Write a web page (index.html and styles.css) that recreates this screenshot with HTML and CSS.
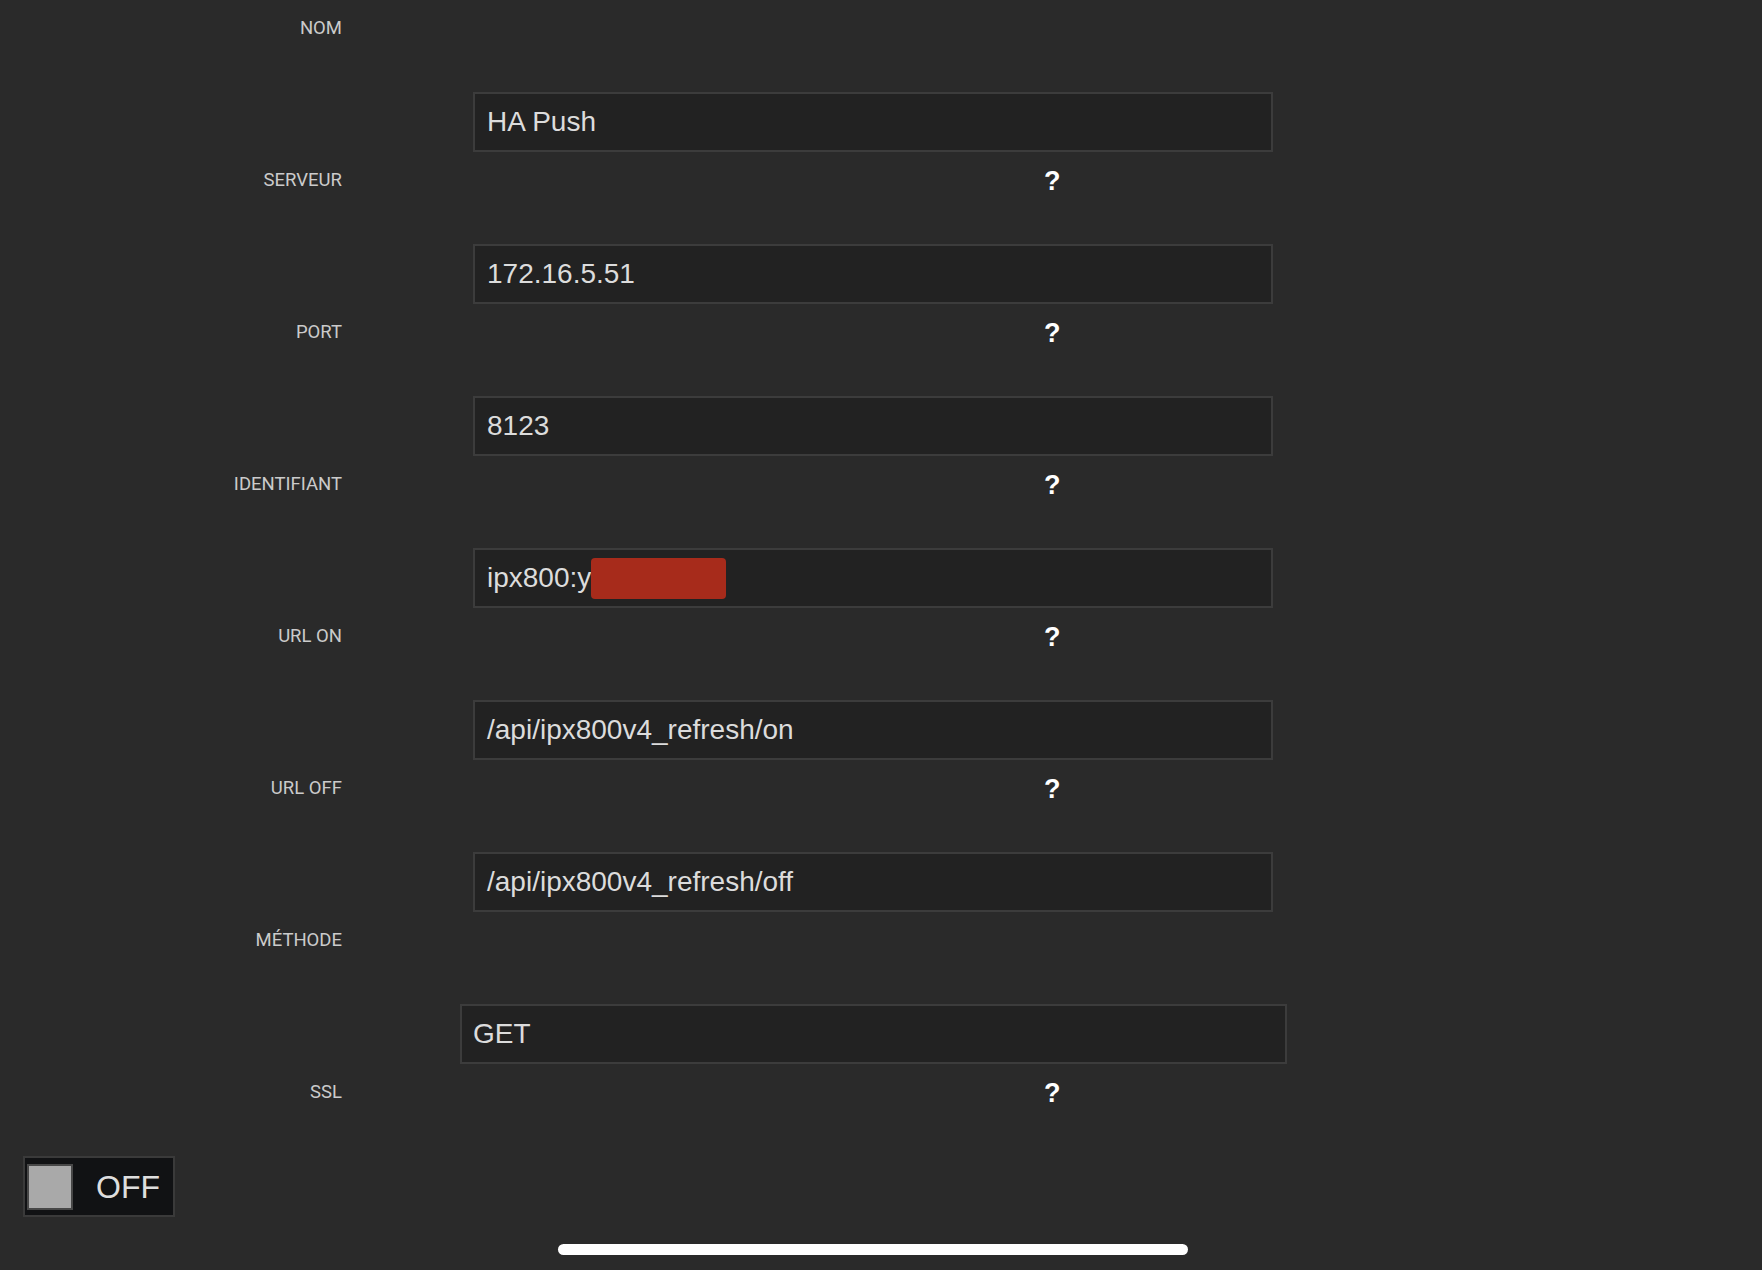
FILE: index.html
```html
<!DOCTYPE html>
<html lang="fr">
<head>
<meta charset="utf-8">
<title>HA Push</title>
<link rel="stylesheet" href="styles.css">
</head>
<body>
<main class="form">
  <section class="field">
    <div class="label-row"><span class="label">NOM</span></div>
    <div class="input">HA Push</div>
  </section>
  <section class="field">
    <div class="label-row"><span class="label">SERVEUR</span><span class="help">?</span></div>
    <div class="input">172.16.5.51</div>
  </section>
  <section class="field">
    <div class="label-row"><span class="label">PORT</span><span class="help">?</span></div>
    <div class="input">8123</div>
  </section>
  <section class="field">
    <div class="label-row"><span class="label">IDENTIFIANT</span><span class="help">?</span></div>
    <div class="input">ipx800:y<span class="redact"></span></div>
  </section>
  <section class="field">
    <div class="label-row"><span class="label">URL ON</span><span class="help">?</span></div>
    <div class="input">/api/ipx800v4_refresh/on</div>
  </section>
  <section class="field">
    <div class="label-row"><span class="label">URL OFF</span><span class="help">?</span></div>
    <div class="input">/api/ipx800v4_refresh/off</div>
  </section>
  <section class="field">
    <div class="label-row"><span class="label">MÉTHODE</span></div>
    <div class="select">GET</div>
  </section>
  <section class="field last">
    <div class="label-row"><span class="label">SSL</span><span class="help">?</span></div>
    <div class="toggle"><span class="knob"></span><span class="toggle-text">OFF</span></div>
  </section>
  <div class="home-bar"></div>
</main>
</body>
</html>
```
FILE: styles.css
```css
html, body {
  margin: 0;
  padding: 0;
  background: #2a2a2a;
}

body {
  width: 1762px;
  height: 1270px;
  overflow: hidden;
  font-family: "Liberation Sans", Arial, sans-serif;
}

.form {
  display: flex;
  flex-direction: column;
}

.field {
  height: 152px;
  display: flex;
  flex-direction: column;
}

.label-row {
  height: 55px;
  display: flex;
  align-items: center;
}

.label {
  width: 342px;
  text-align: right;
  font-family: Roboto, "Liberation Sans", sans-serif;
  font-size: 18.5px;
  color: #cbcbcb;
}

.help {
  margin-left: 702px;
  margin-top: 4px;
  font-family: "Liberation Sans", Arial, sans-serif;
  font-weight: bold;
  font-size: 27px;
  color: #ffffff;
  line-height: 1;
}

.input {
  margin-top: 37px;
  margin-left: 473px;
  width: 800px;
  height: 60px;
  box-sizing: border-box;
  border: 2px solid #3c3c3c;
  background: #222222;
  display: flex;
  align-items: center;
  padding-left: 12px;
  font-size: 28px;
  color: #dcdcdc;
}

.redact {
  display: inline-block;
  width: 135px;
  height: 41px;
  background: #a72b1b;
  border-radius: 4px;
}

.select {
  margin-top: 37px;
  margin-left: 460px;
  width: 827px;
  height: 60px;
  box-sizing: border-box;
  border: 2px solid #3c3c3c;
  background: #222222;
  display: flex;
  align-items: center;
  padding-left: 11px;
  font-size: 28px;
  color: #dcdcdc;
}

.field.last {
  height: 153px;
}

.toggle {
  margin-top: 37px;
  margin-left: 23px;
  width: 152px;
  height: 61px;
  box-sizing: border-box;
  border: 2px solid #3a3a3a;
  background: #111214;
  display: flex;
  align-items: center;
  padding-left: 2px;
}

.knob {
  width: 46px;
  height: 46px;
  box-sizing: border-box;
  border: 2px solid #474747;
  background: #a9a9a9;
}

.toggle-text {
  margin-left: 23px;
  margin-top: 2px;
  font-size: 32px;
  color: #dedede;
}

.home-bar {
  margin-top: 27px;
  margin-left: 558px;
  width: 630px;
  height: 11px;
  border-radius: 6px;
  background: #ffffff;
}
```
